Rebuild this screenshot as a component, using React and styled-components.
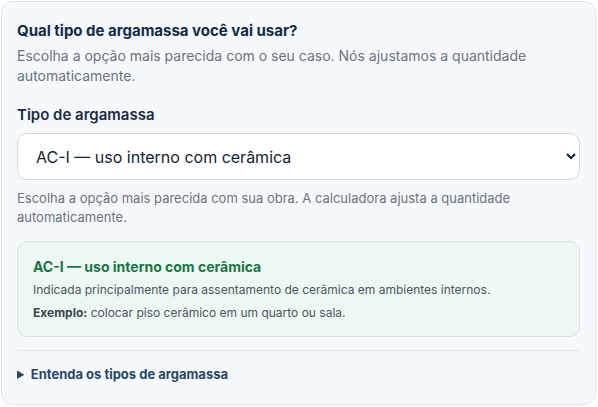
import React, { useState } from "react";
import styled, { createGlobalStyle } from "styled-components";

const Global = createGlobalStyle`
  html, body { margin: 0; padding: 0; background: #ffffff; }
  body { padding: 1px; font-family: Inter, "Noto Sans", sans-serif; }
  * { box-sizing: border-box; }
`;

const Card = styled.section`
  width: 595px;
  background: #f5f9fd;
  border: 1px solid #dde5ee;
  border-radius: 12px;
  padding: 18px 15px 20px;
`;

const Title = styled.h2`
  margin: 0 0 4px;
  font-size: 15px;
  line-height: 22px;
  font-weight: 700;
  color: #112a46;
`;

const Subtitle = styled.p`
  margin: 0;
  font-size: 14px;
  line-height: 20px;
  color: #6b7280;
`;

const Label = styled.label`
  display: block;
  margin: 18px 0 7px;
  font-size: 15px;
  line-height: 22px;
  font-weight: 600;
  color: #1a2b42;
`;

const Select = styled.select`
  display: block;
  width: 563px;
  height: 47px;
  padding: 0 12px 0 14px;
  font-family: Inter, "Noto Sans", sans-serif;
  font-size: 16px;
  color: #0f1f36;
  background: #ffffff;
  border: 1px solid #cfd8e3;
  border-radius: 10px;
`;

const Help = styled.p`
  margin: 9px 0 0;
  font-size: 13px;
  line-height: 19px;
  color: #6b7280;
`;

const InfoBox = styled.div`
  margin-top: 14px;
  width: 563px;
  background: #eef8f3;
  border: 1px solid #d7e8df;
  border-radius: 10px;
  padding: 14px 15px 14px;
`;

const InfoTitle = styled.div`
  font-size: 14px;
  line-height: 22px;
  font-weight: 700;
  color: #1b7448;
`;

const InfoText = styled.p`
  margin: ${(p) => (p.$first ? "3px" : "5px")} 0 0;
  font-size: 12px;
  line-height: 18px;
  color: #4b5563;

  strong {
    font-weight: 700;
    color: #3b4452;
  }
`;

const Divider = styled.hr`
  margin: 13px 0 0;
  width: 563px;
  border: 0;
  border-top: 1px solid #e1e7ee;
`;

const Details = styled.details`
  margin-top: 13px;
`;

const Summary = styled.summary`
  font-size: 13px;
  line-height: 20px;
  font-weight: 700;
  color: #2b4667;
  cursor: pointer;
`;

const options = [
  "AC-I — uso interno com cerâmica",
  "AC-II — uso externo",
  "AC-III — porcelanato e alta aderência",
];

export default function App() {
  const [value, setValue] = useState(options[0]);
  return (
    <>
      <Global />
      <Card>
        <Title>Qual tipo de argamassa você vai usar?</Title>
        <Subtitle>
          Escolha a opção mais parecida com o seu caso. Nós ajustamos a quantidade automaticamente.
        </Subtitle>
        <Label htmlFor="tipo">Tipo de argamassa</Label>
        <Select id="tipo" value={value} onChange={(e) => setValue(e.target.value)}>
          {options.map((o) => (
            <option key={o} value={o}>{o}</option>
          ))}
        </Select>
        <Help>
          Escolha a opção mais parecida com sua obra. A calculadora ajusta a quantidade automaticamente.
        </Help>
        <InfoBox>
          <InfoTitle>AC-I — uso interno com cerâmica</InfoTitle>
          <InfoText $first>Indicada principalmente para assentamento de cerâmica em ambientes internos.</InfoText>
          <InfoText><strong>Exemplo:</strong> colocar piso cerâmico em um quarto ou sala.</InfoText>
        </InfoBox>
        <Divider />
        <Details>
          <Summary>Entenda os tipos de argamassa</Summary>
        </Details>
      </Card>
    </>
  );
}
